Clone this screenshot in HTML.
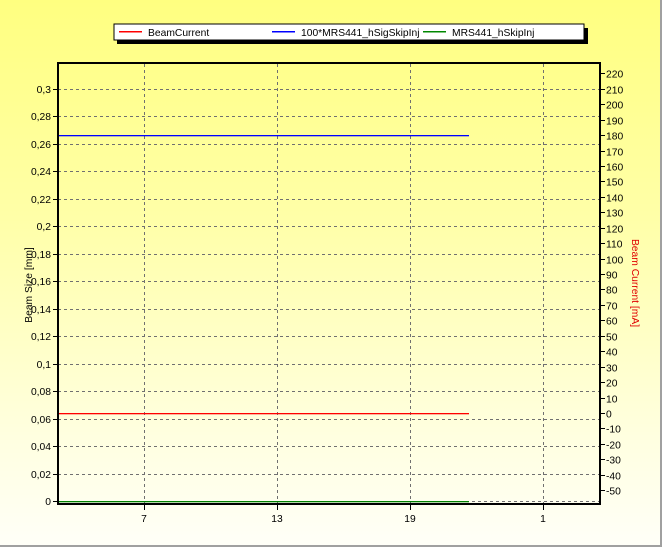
<!DOCTYPE html>
<html><head><style>
html,body{margin:0;padding:0;width:662px;height:547px;overflow:hidden}
body{background:linear-gradient(#ffff80 0%,#ffffa8 40%,#ffffe0 80%,#fffff8 100%);font-family:"Liberation Sans",sans-serif}
svg{position:absolute;left:0;top:0}
text{font-family:"Liberation Sans",sans-serif;font-size:10.3px;fill:#000}
</style></head><body>
<svg width="662" height="547" xmlns="http://www.w3.org/2000/svg">
<rect x="660" y="0" width="2" height="547" fill="#a0a0a0"/>
<rect x="0" y="545" width="662" height="2" fill="#a0a0a0"/>
<!-- legend -->
<rect x="117" y="28" width="471" height="16" fill="#000"/>
<rect x="114" y="24" width="470" height="16" fill="#fff" stroke="#000"/>
<rect x="119" y="31" width="23" height="1.5" fill="#f00"/><text x="148" y="36">BeamCurrent</text>
<rect x="272" y="31" width="23" height="1.5" fill="#00f"/><text x="301" y="36">100*MRS441_hSigSkipInj</text>
<rect x="423" y="31" width="23" height="1.5" fill="#080"/><text x="452" y="36">MRS441_hSkipInj</text>
<!-- grid -->
<g stroke="#707070" stroke-dasharray="3,3" stroke-width="1">
<line x1="144.5" y1="64" x2="144.5" y2="504"/><line x1="277.5" y1="64" x2="277.5" y2="504"/>
<line x1="410.5" y1="64" x2="410.5" y2="504"/><line x1="543.5" y1="64" x2="543.5" y2="504"/>
<line x1="58" y1="89.5" x2="600" y2="89.5"/><line x1="58" y1="116.5" x2="600" y2="116.5"/>
<line x1="58" y1="144.5" x2="600" y2="144.5"/><line x1="58" y1="171.5" x2="600" y2="171.5"/>
<line x1="58" y1="199.5" x2="600" y2="199.5"/><line x1="58" y1="226.5" x2="600" y2="226.5"/>
<line x1="58" y1="254.5" x2="600" y2="254.5"/><line x1="58" y1="281.5" x2="600" y2="281.5"/>
<line x1="58" y1="309.5" x2="600" y2="309.5"/><line x1="58" y1="336.5" x2="600" y2="336.5"/>
<line x1="58" y1="364.5" x2="600" y2="364.5"/><line x1="58" y1="391.5" x2="600" y2="391.5"/>
<line x1="58" y1="419.5" x2="600" y2="419.5"/><line x1="58" y1="446.5" x2="600" y2="446.5"/>
<line x1="58" y1="474.5" x2="600" y2="474.5"/><line x1="58" y1="501.5" x2="600" y2="501.5"/>
</g>
<!-- data -->
<rect x="59" y="135" width="410" height="1.3" fill="#0000ff"/>
<rect x="59" y="413" width="410" height="1.3" fill="#ff0000"/>
<rect x="59" y="501" width="410" height="1.3" fill="#008000"/>
<!-- axes -->
<rect x="58" y="63" width="542" height="441" fill="none" stroke="#000" stroke-width="2"/>
<g stroke="#000">
<line x1="53" y1="89.5" x2="58" y2="89.5"/><line x1="53" y1="116.5" x2="58" y2="116.5"/><line x1="53" y1="144.5" x2="58" y2="144.5"/><line x1="53" y1="171.5" x2="58" y2="171.5"/><line x1="53" y1="199.5" x2="58" y2="199.5"/><line x1="53" y1="226.5" x2="58" y2="226.5"/><line x1="53" y1="254.5" x2="58" y2="254.5"/><line x1="53" y1="281.5" x2="58" y2="281.5"/><line x1="53" y1="309.5" x2="58" y2="309.5"/><line x1="53" y1="336.5" x2="58" y2="336.5"/><line x1="53" y1="364.5" x2="58" y2="364.5"/><line x1="53" y1="391.5" x2="58" y2="391.5"/><line x1="53" y1="419.5" x2="58" y2="419.5"/><line x1="53" y1="446.5" x2="58" y2="446.5"/><line x1="53" y1="474.5" x2="58" y2="474.5"/><line x1="53" y1="501.5" x2="58" y2="501.5"/>
<line x1="144.5" y1="504" x2="144.5" y2="510"/><line x1="277.5" y1="504" x2="277.5" y2="510"/><line x1="410.5" y1="504" x2="410.5" y2="510"/><line x1="543.5" y1="504" x2="543.5" y2="510"/>
</g>
<g stroke="#000" id="rt"></g>
<g>
<text x="51" y="93" text-anchor="end">0,3</text><text x="51" y="120" text-anchor="end">0,28</text><text x="51" y="148" text-anchor="end">0,26</text><text x="51" y="175" text-anchor="end">0,24</text><text x="51" y="203" text-anchor="end">0,22</text><text x="51" y="230" text-anchor="end">0,2</text><text x="51" y="258" text-anchor="end">0,18</text><text x="51" y="285" text-anchor="end">0,16</text><text x="51" y="313" text-anchor="end">0,14</text><text x="51" y="340" text-anchor="end">0,12</text><text x="51" y="368" text-anchor="end">0,1</text><text x="51" y="395" text-anchor="end">0,08</text><text x="51" y="423" text-anchor="end">0,06</text><text x="51" y="450" text-anchor="end">0,04</text><text x="51" y="478" text-anchor="end">0,02</text><text x="51" y="505" text-anchor="end">0</text>
<text x="144" y="522" text-anchor="middle">7</text><text x="277" y="522" text-anchor="middle">13</text><text x="410" y="522" text-anchor="middle">19</text><text x="543" y="522" text-anchor="middle">1</text>
</g>
<text transform="translate(32,285) rotate(-90)" text-anchor="middle">Beam Size [mm]</text>
<text transform="translate(632,283) rotate(90)" text-anchor="middle" style="fill:#e00000">Beam Current [mA]</text>
<g id="rlab"></g>
<script>
var s="http://www.w3.org/2000/svg",rt=document.getElementById('rt'),rl=document.getElementById('rlab');
for(var v=220;v>=-50;v-=10){var y=Math.round(413-v*1.544)+0.5;
var l=document.createElementNS(s,'line');l.setAttribute('x1',600);l.setAttribute('x2',605);l.setAttribute('y1',y);l.setAttribute('y2',y);rt.appendChild(l);
var t=document.createElementNS(s,'text');t.setAttribute('x',606);t.setAttribute('y',y+4);t.textContent=v;rl.appendChild(t);}
</script>
</svg>
</body></html>
